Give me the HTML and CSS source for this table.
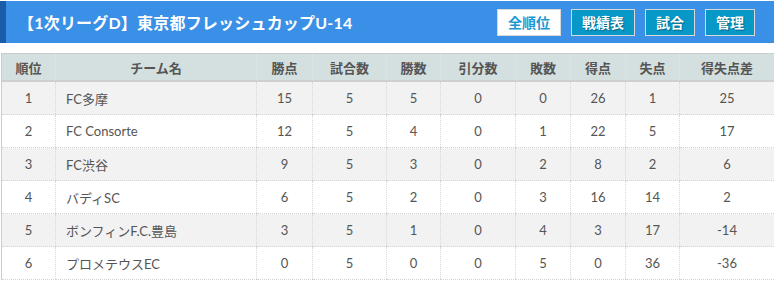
FILE: index.html
```html
<!DOCTYPE html>
<html lang="ja">
<head>
<meta charset="utf-8">
<link rel="stylesheet" href="styles.css">
</head>
<body>
<div class="page">
  <header class="bar">
    <h1 class="title">【1次リーグD】東京都フレッシュカップU-14</h1>
    <nav class="nav">
      <a class="btn btn-active">全順位</a>
      <a class="btn">戦績表</a>
      <a class="btn">試合</a>
      <a class="btn">管理</a>
    </nav>
  </header>
  <table class="standings">
    <colgroup>
      <col class="c1"><col class="c2"><col class="c3"><col class="c4"><col class="c5">
      <col class="c6"><col class="c7"><col class="c8"><col class="c9"><col class="c10">
    </colgroup>
    <thead>
      <tr><th>順位</th><th>チーム名</th><th>勝点</th><th>試合数</th><th>勝数</th><th>引分数</th><th>敗数</th><th>得点</th><th>失点</th><th>得失点差</th></tr>
    </thead>
    <tbody>
      <tr><td>1</td><td class="team">FC多摩</td><td>15</td><td>5</td><td>5</td><td>0</td><td>0</td><td>26</td><td>1</td><td>25</td></tr>
      <tr><td>2</td><td class="team">FC Consorte</td><td>12</td><td>5</td><td>4</td><td>0</td><td>1</td><td>22</td><td>5</td><td>17</td></tr>
      <tr><td>3</td><td class="team">FC渋谷</td><td>9</td><td>5</td><td>3</td><td>0</td><td>2</td><td>8</td><td>2</td><td>6</td></tr>
      <tr><td>4</td><td class="team">バディSC</td><td>6</td><td>5</td><td>2</td><td>0</td><td>3</td><td>16</td><td>14</td><td>2</td></tr>
      <tr><td>5</td><td class="team">ボンフィンF.C.豊島</td><td>3</td><td>5</td><td>1</td><td>0</td><td>4</td><td>3</td><td>17</td><td>-14</td></tr>
      <tr><td>6</td><td class="team">プロメテウスEC</td><td>0</td><td>5</td><td>0</td><td>0</td><td>5</td><td>0</td><td>36</td><td>-36</td></tr>
    </tbody>
  </table>
</div>
</body>
</html>
```
FILE: styles.css
```css
html, body {
  margin: 0;
  padding: 0;
  background: #fff;
}
body {
  font-family: Lato, "Noto Sans CJK JP", sans-serif;
  color: #555;
}
.page {
  padding-top: 1px;
}
.bar {
  height: 42px;
  box-sizing: border-box;
  background: #3a90e6;
  border-left: 6px solid #1a5ca8;
  display: flex;
  align-items: center;
  justify-content: space-between;
  padding: 0 19px 0 12px;
}
.title {
  margin: 0;
  color: #fff;
  font-size: 16px;
  font-weight: bold;
  letter-spacing: 0.2px;
  font-family: Lato, "Noto Sans CJK JP", sans-serif;
}
.nav {
  display: flex;
  gap: 10px;
}
.btn {
  display: flex;
  align-items: center;
  justify-content: center;
  height: 27px;
  box-sizing: border-box;
  padding: 0 10px;
  background: #0898c8;
  border: 1px solid #d8d8d8;
  color: #fff;
  font-size: 14px;
  font-weight: bold;
  text-shadow: 1px 1px 1px rgba(0,0,0,0.35);
  font-family: "Noto Sans CJK JP", sans-serif;
}
.btn-active {
  background: #fff;
  color: #1b98d2;
  text-shadow: none;
}
.standings {
  margin-top: 10px;
  margin-left: 1px;
  width: 773px;
  border-collapse: collapse;
  table-layout: fixed;
  font-size: 13px;
  border: 1px solid #ccc;
  border-bottom: none;
}
.c1 { width: 54px; }
.c2 { width: 201px; }
.c3 { width: 56px; }
.c4 { width: 74px; }
.c5 { width: 54px; }
.c6 { width: 75px; }
.c7 { width: 55px; }
.c8 { width: 55px; }
.c9 { width: 54px; }
.c10 { width: 95px; }
.standings th {
  height: 26px;
  padding: 0;
  background: #d4dfdf;
  color: #555;
  font-weight: bold;
  font-size: 13px;
  border-bottom: 2px solid #cfcfcf;
  border-left: 1px dotted #e4e4e4;
  font-family: "Noto Sans CJK JP", sans-serif;
}
.standings th:first-child,
.standings td:first-child {
  border-left: none;
}
.standings td {
  height: 32px;
  padding: 0;
  text-align: center;
  border-left: 1px dotted #d8d8d8;
  border-bottom: 1px dotted #d4d4d4;
}
.standings tbody tr:nth-child(odd) td {
  background: #f2f2f2;
}
.standings td.team {
  text-align: left;
  padding-left: 10px;
}
```
